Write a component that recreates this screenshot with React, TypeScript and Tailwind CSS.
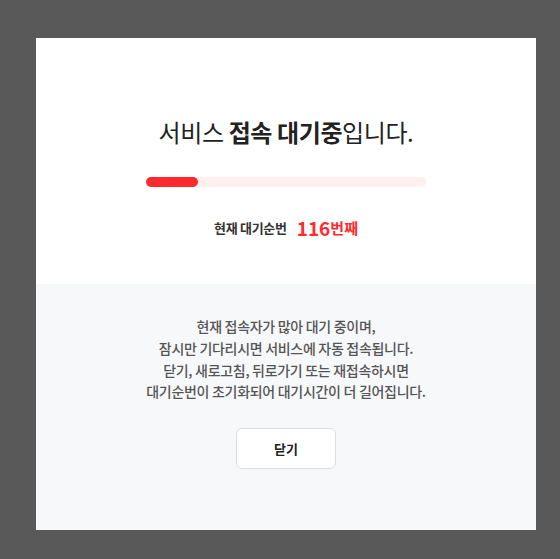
const App = () => {
  return (
    <div
      className="min-h-[559px] w-full bg-[#595959] pt-[38px] pl-[36px]"
      style={{ fontFamily: '"Noto Sans CJK KR", "Noto Sans", sans-serif' }}
    >
      <div className="w-[500px] h-[492px] flex flex-col">
        {/* top */}
        <div className="h-[246px] bg-white flex flex-col items-center pt-[78px]">
          <h1 className="text-[24px] leading-[32px] text-[#222] tracking-[-0.4px]">
            서비스 <b className="font-bold">접속 대기중</b>입니다.
          </h1>
          <div className="mt-[29px] w-[280px] h-[10px] rounded-full bg-[#fff0f0]">
            <div className="h-full w-[52px] rounded-full bg-[#ff2a2d]" />
          </div>
          <div className="mt-[27px] flex items-center h-[28px]">
            <span className="text-[13px] font-semibold text-[#333] tracking-[-0.3px]">
              현재 대기순번
            </span>
            <span className="ml-[10px] text-[19px] font-bold text-[#ff2a2d]">116</span>
            <span className="text-[15px] font-semibold text-[#ff2a2d]">번째</span>
          </div>
        </div>
        {/* bottom */}
        <div className="h-[246px] bg-[#f7f8fa] flex flex-col items-center pt-[31px]">
          <p className="text-[14px] leading-[22px] font-medium text-[#555] text-center tracking-[-0.3px]">
            현재 접속자가 많아 대기 중이며,
            <br />
            잠시만 기다리시면 서비스에 자동 접속됩니다.
          </p>
          <p className="mt-[1px] text-[14px] leading-[21px] font-medium text-[#555] text-center tracking-[-0.3px]">
            닫기, 새로고침, 뒤로가기 또는 재접속하시면
            <br />
            대기순번이 초기화되어 대기시간이 더 길어집니다.
          </p>
          <button className="mt-[26px] w-[100px] h-[41px] rounded-[6px] border border-[#dcdde0] bg-white text-[13px] font-bold text-[#222]">
            닫기
          </button>
        </div>
      </div>
    </div>
  );
};

export default App;
